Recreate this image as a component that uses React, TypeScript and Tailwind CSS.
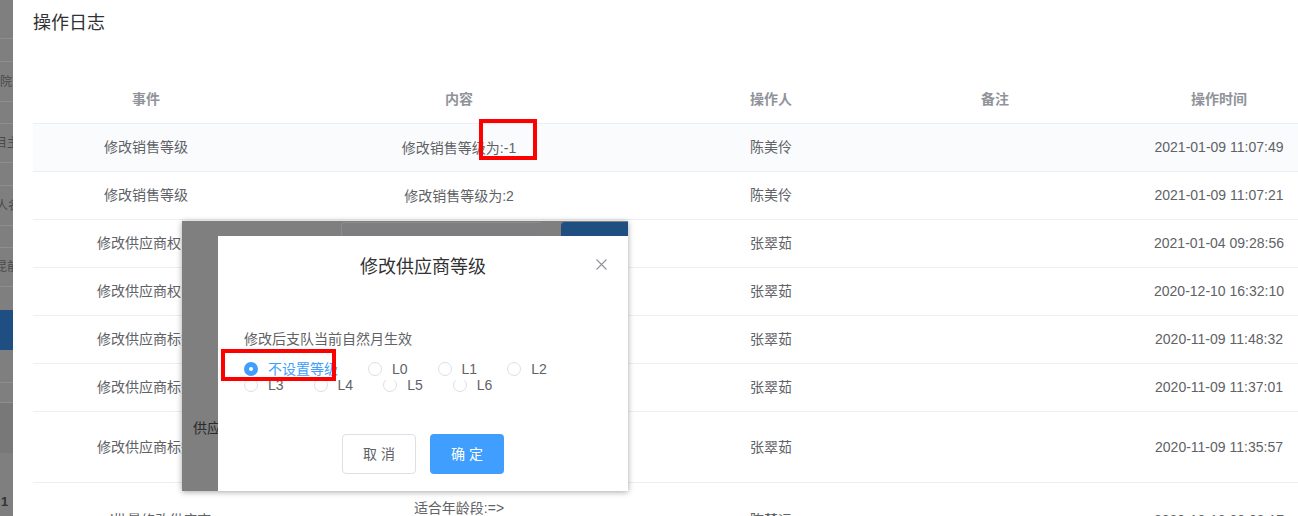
import React from "react";

type Row = {
  event: string;
  content: string[];
  user: string;
  time: string;
  h: string;
  bg?: string;
  top?: boolean;
};

const rows: Row[] = [
  { event: "修改销售等级", content: ["修改销售等级为:-1"], user: "陈美伶", time: "2021-01-09 11:07:49", h: "h-[48px]", bg: "bg-[#fafbfd]" },
  { event: "修改销售等级", content: ["修改销售等级为:2"], user: "陈美伶", time: "2021-01-09 11:07:21", h: "h-[48px]" },
  { event: "修改供应商权限", content: ["修改供应商权限"], user: "张翠茹", time: "2021-01-04 09:28:56", h: "h-[48px]" },
  { event: "修改供应商权限", content: ["修改供应商权限"], user: "张翠茹", time: "2020-12-10 16:32:10", h: "h-[48px]" },
  { event: "修改供应商标签", content: ["修改供应商标签"], user: "张翠茹", time: "2020-11-09 11:48:32", h: "h-[48px]" },
  { event: "修改供应商标签", content: ["修改供应商标签"], user: "张翠茹", time: "2020-11-09 11:37:01", h: "h-[48px]" },
  { event: "修改供应商标签", content: ["修改供应商标签"], user: "张翠茹", time: "2020-11-09 11:35:57", h: "h-[71px]" },
  { event: "excel批量修改供应商", content: ["适合年龄段:=>", "0-3岁"], user: "陈楚运", time: "2020-10-13 20:03:17", h: "h-[76px]", top: true },
];

// masked page peeking out on the left edge
function SideStrip() {
  return (
    <div className="w-[13px] shrink-0 h-full bg-[#7f7f7f] overflow-hidden flex flex-col text-[12px] text-[#4a4a4a] leading-none">
      <div className="h-[39px] border-b border-[#8e8e8e]" />
      <div className="h-[23px] border-b border-[#8e8e8e]" />
      <div className="h-[40px] border-b border-[#8e8e8e] flex items-center whitespace-nowrap">院</div>
      <div className="h-[22px] border-b border-[#8e8e8e]" />
      <div className="h-[39px] border-b border-[#8e8e8e] flex items-center whitespace-nowrap -ml-[5px]">目主</div>
      <div className="h-[23px] border-b border-[#8e8e8e]" />
      <div className="h-[40px] border-b border-[#8e8e8e] flex items-center whitespace-nowrap -ml-[4px]">人名</div>
      <div className="h-[22px] border-b border-[#8e8e8e]" />
      <div className="h-[39px] border-b border-[#8e8e8e] flex items-center whitespace-nowrap -ml-[5px]">昆前</div>
      <div className="h-[23px]" />
      <div className="h-[40px] bg-[#1f4e82]" />
      <div className="h-[33px] border-b border-[#8e8e8e]" />
      <div className="h-[20px] border-b border-[#8e8e8e]" />
      <div className="h-[50px] bg-[#787878]" />
      <div className="flex-1 flex items-end pb-[8px] pl-[1px] text-[13px] font-bold text-[#333]">1</div>
    </div>
  );
}

function LogTable() {
  return (
    <div className="w-[1298px]">
      <div className="grid grid-cols-[226px_400px_224px_224px_224px] h-[48px] items-center border-b border-[#ebeef5] text-[14px] font-bold text-[#909399] text-center">
        <div>事件</div>
        <div>内容</div>
        <div>操作人</div>
        <div>备注</div>
        <div>操作时间</div>
      </div>
      {rows.map((r, i) => (
        <div
          key={i}
          className={`grid grid-cols-[226px_400px_224px_224px_224px] items-center border-b border-[#ebeef5] text-[14px] text-[#606266] text-center ${r.h} ${r.bg ?? ""}`}
        >
          <div>{r.event}</div>
          <div className={r.top ? "self-start pt-[14px] leading-[22px]" : "leading-[22px]"}>
            {r.content.map((c, j) => (
              <div key={j}>{c}</div>
            ))}
          </div>
          <div>{r.user}</div>
          <div />
          <div>{r.time}</div>
        </div>
      ))}
    </div>
  );
}

function Radio({ label, checked }: { label: string; checked?: boolean }) {
  return (
    <label className="inline-flex items-center mr-[30px] text-[14px] leading-none">
      {checked ? (
        <span className="w-[14px] h-[14px] rounded-full bg-[#409eff] flex items-center justify-center">
          <span className="w-[4px] h-[4px] rounded-full bg-white" />
        </span>
      ) : (
        <span className="w-[14px] h-[14px] rounded-full border border-[#dcdfe6] bg-white" />
      )}
      <span className={`pl-[10px] ${checked ? "text-[#409eff]" : "text-[#606266]"}`}>{label}</span>
    </label>
  );
}

function DialogShot() {
  return (
    <div className="absolute z-10 left-[182px] top-[221px] w-[446px] h-[270px] bg-[#7f7f7f] shadow-[0_1px_6px_rgba(0,0,0,0.35)] flex flex-col">
      <div className="h-[15px] shrink-0 flex items-end">
        <div className="ml-[159px] w-[200px] h-[14px] rounded-tl-[4px] border-t border-l border-[#8c8c8c] bg-[#7e7e80]" />
        <div className="ml-[20px] flex-1 h-[14px] rounded-tl-[4px] bg-[#1f4e80]" />
      </div>
      <div className="flex flex-1">
        <div className="w-[36px] shrink-0 pt-[182px] pl-[11px] text-[14px] text-[#2b2b2b] whitespace-nowrap overflow-hidden">供应</div>
        <div className="relative flex-1 bg-white flex flex-col">
          <div className="pt-[19px] text-center text-[18px] leading-[24px] text-[#303133]">修改供应商等级</div>
          <svg className="absolute left-[378px] top-[23px]" width="11" height="11" viewBox="0 0 11 11">
            <path d="M0.5 0.5 L10.5 10.5 M10.5 0.5 L0.5 10.5" stroke="#909399" strokeWidth="1.1" fill="none" />
          </svg>
          <div className="mt-[50px] pl-[26px] text-[14px] leading-[20px] text-[#606266]">修改后支队当前自然月生效</div>
          <div className="relative z-10 mt-[9px] h-[22px] pl-[26px] bg-white flex items-center">
            <Radio label="不设置等级" checked />
            <Radio label="L0" />
            <Radio label="L1" />
            <Radio label="L2" />
          </div>
          <div className="-mt-[4px] h-[18px] pl-[26px] flex items-center">
            <Radio label="L3" />
            <Radio label="L4" />
            <Radio label="L5" />
            <Radio label="L6" />
          </div>
          <div className="mt-[40px] flex justify-center gap-[14px]">
            <button className="w-[74px] h-[40px] rounded-[4px] border border-[#dcdfe6] bg-white text-[14px] text-[#606266]">取 消</button>
            <button className="w-[74px] h-[40px] rounded-[4px] bg-[#409eff] text-[14px] text-white">确 定</button>
          </div>
        </div>
      </div>
    </div>
  );
}

export default function App() {
  return (
    <div className="relative w-[1298px] h-[516px] overflow-hidden bg-white flex font-['Liberation_Sans','Noto_Sans_CJK_SC',sans-serif]">
      <SideStrip />
      <div className="flex-1 overflow-hidden pl-[20px]">
        <h2 className="pt-[11px] text-[18px] leading-[24px] text-[#303133] font-normal">操作日志</h2>
        <div className="mt-[41px]">
          <LogTable />
        </div>
      </div>
      <DialogShot />
      {/* red annotation boxes */}
      <div className="absolute z-20 left-[479px] top-[119px] w-[58px] h-[41px] border-[4px] border-[#ff0000]" />
      <div className="absolute z-20 left-[221px] top-[349px] w-[115px] h-[32px] border-[4px] border-[#ff0000]" />
    </div>
  );
}
